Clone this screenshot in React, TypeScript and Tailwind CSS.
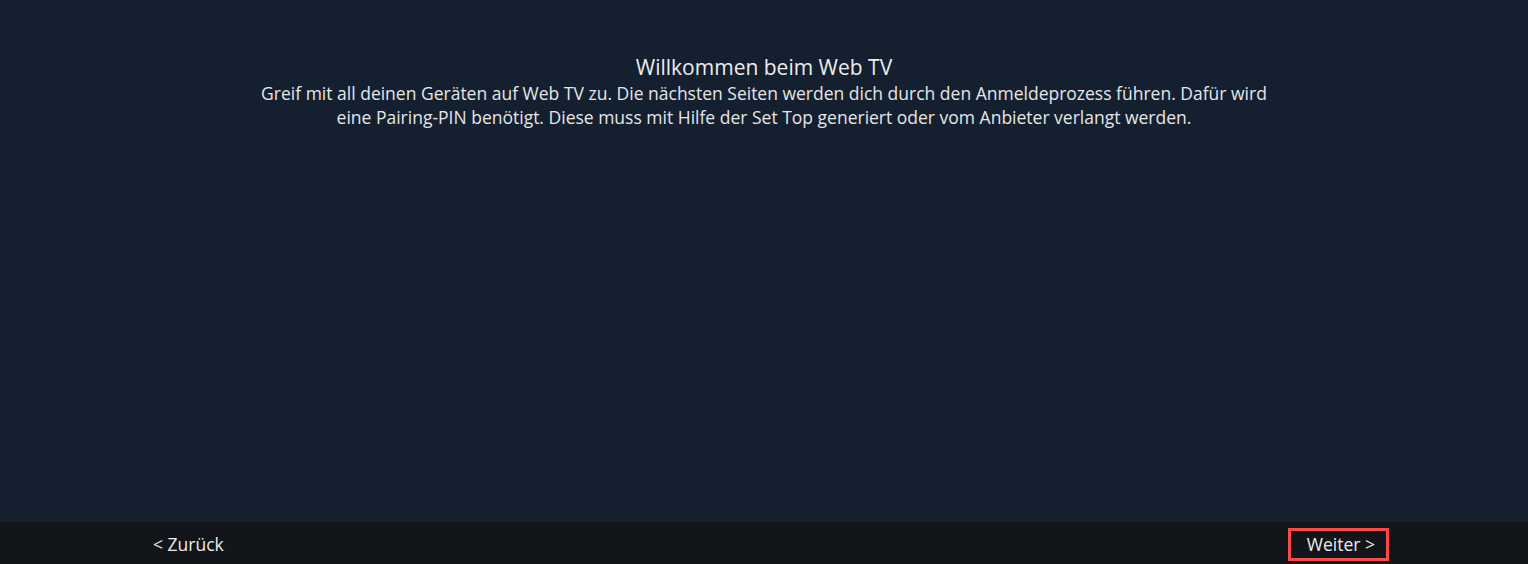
export default function App() {
  return (
    <div
      className="w-[1528px] h-[564px] flex flex-col bg-[#142030] text-[#e8e8e8] overflow-hidden"
      style={{ fontFamily: '"Open Sans", "Noto Sans", sans-serif' }}
    >
      <main className="flex-1 flex flex-col items-center pt-[53px]">
        <h1 className="text-[21px] leading-[28px] font-normal text-[#ececec]">Willkommen beim Web TV</h1>
        <p className="text-[17.5px] leading-[24px] text-center w-[1020px] text-[#e6e6e6]">
          Greif mit all deinen Geräten auf Web TV zu. Die nächsten Seiten werden dich durch den Anmeldeprozess führen. Dafür wird eine Pairing-PIN benötigt. Diese muss mit Hilfe der Set Top generiert oder vom Anbieter verlangt werden.
        </p>
      </main>
      <footer className="h-[42px] bg-[#121519] flex items-start justify-between pt-[6px] pl-[153px] pr-[139px]">
        <button className="h-[33px] flex items-center text-[17.5px] text-[#ececec]">&lt; Zurück</button>
        <button className="h-[33px] border-[3px] border-[#ff4848] pl-[16px] pr-[11px] text-[17.5px] text-[#ececec] flex items-center">
          Weiter &gt;
        </button>
      </footer>
    </div>
  );
}
